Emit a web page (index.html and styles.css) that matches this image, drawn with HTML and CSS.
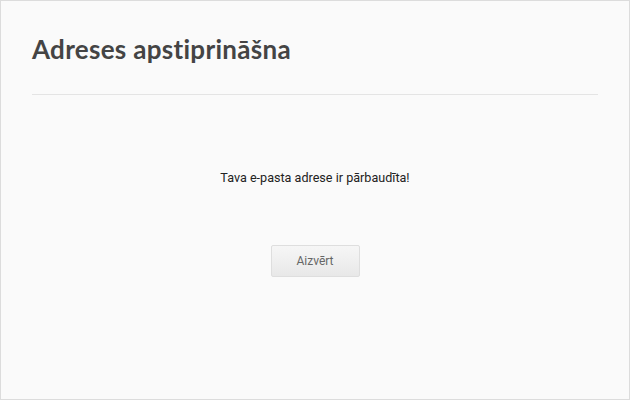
FILE: index.html
```html
<!DOCTYPE html>
<html lang="lv">
<head>
    <meta charset="UTF-8">
    <title>Adreses apstiprināšna</title>
    <link rel="stylesheet" href="styles.css">
</head>
<body>

<div class="dialog">
    <div class="dialog-header">
        <h1>Adreses apstiprināšna</h1>
    </div>

    <div class="dialog-body">
        <p class="message">Tava e-pasta adrese ir pārbaudīta!</p>
        <button type="button" class="btn-close">Aizvērt</button>
    </div>
</div>

</body>
</html>
```

FILE: styles.css
```css
html, body {
    margin: 0;
    padding: 0;
}

body {
    font-family: 'Roboto', 'Liberation Sans', sans-serif;
    background: #fafafa;
    color: #222;
}

.dialog {
    box-sizing: border-box;
    width: 630px;
    height: 400px;
    border: 1px solid #dcdcdc;
    background: #fafafa;
    padding: 0 31px;
}

.dialog-header {
    border-bottom: 1px solid #e4e4e4;
    padding-top: 31px;
    height: 62px;
}

h1 {
    margin: 0;
    font-family: 'Lato', 'DejaVu Sans', sans-serif;
    font-size: 26px;
    font-weight: bold;
    color: #444;
    line-height: 34px;
    letter-spacing: 0.3px;
}

.dialog-body {
    display: flex;
    flex-direction: column;
    align-items: center;
}

.message {
    margin: 74px 0 0;
    font-size: 12.6px;
    line-height: 18px;
    color: #222;
}

.btn-close {
    margin-top: 58px;
    width: 89px;
    height: 32px;
    border: 1px solid #dedede;
    border-radius: 2px;
    background: linear-gradient(180deg, #f6f6f6, #e8e8e8);
    font-family: 'Roboto', sans-serif;
    font-size: 12px;
    color: #666;
    cursor: pointer;
}
```
